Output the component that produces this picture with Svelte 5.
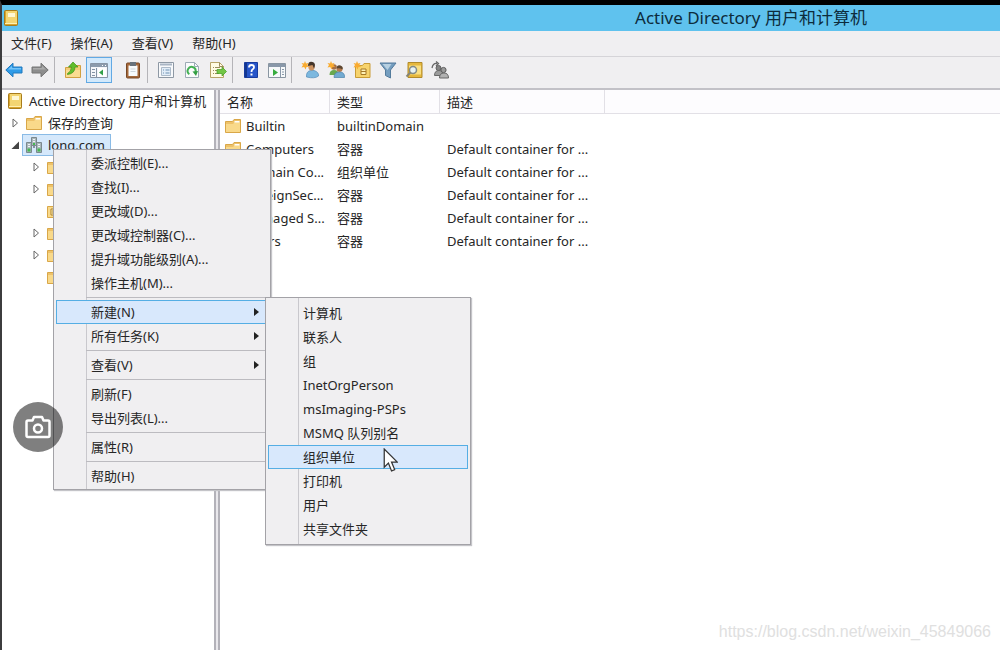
<script lang="ts">
    type Entry = { label: string; arrow?: boolean; active?: boolean };

    const menus = ["文件(F)", "操作(A)", "查看(V)", "帮助(H)"];

    const tools = [
        [
            { icon: "back", label: "后退" },
            { icon: "forward", label: "前进" },
        ],
        [
            { icon: "up", label: "上一级" },
            { icon: "tree", label: "控制台树" },
            { icon: "clipboard", label: "粘贴" },
        ],
        [
            { icon: "properties", label: "属性" },
            { icon: "refresh", label: "刷新" },
            { icon: "export", label: "导出列表" },
        ],
        [
            { icon: "help", label: "帮助" },
            { icon: "pane", label: "操作窗格" },
        ],
        [
            { icon: "user", label: "新建用户" },
            { icon: "group", label: "新建组" },
            { icon: "unit", label: "新建组织单位" },
            { icon: "filter", label: "筛选器" },
            { icon: "find", label: "查找" },
            { icon: "members", label: "添加到组" },
        ],
    ];

    const children = [
        { icon: "folder", expandable: true },
        { icon: "folder", expandable: true },
        { icon: "ou", expandable: false },
        { icon: "folder", expandable: true },
        { icon: "folder", expandable: true },
        { icon: "folder", expandable: false },
    ];

    const rows = [
        { icon: "folder", name: "Builtin", type: "builtinDomain", desc: "" },
        { icon: "folder", name: "Computers", type: "容器", desc: "Default container for ..." },
        { icon: "ou", name: "Domain Co...", type: "组织单位", desc: "Default container for ..." },
        { icon: "folder", name: "ForeignSec...", type: "容器", desc: "Default container for ..." },
        { icon: "folder", name: "Managed S...", type: "容器", desc: "Default container for ..." },
        { icon: "folder", name: "Users", type: "容器", desc: "Default container for ..." },
    ];

    const contextMenu: Entry[][] = [
        [
            { label: "委派控制(E)..." },
            { label: "查找(I)..." },
            { label: "更改域(D)..." },
            { label: "更改域控制器(C)..." },
            { label: "提升域功能级别(A)..." },
            { label: "操作主机(M)..." },
        ],
        [
            { label: "新建(N)", arrow: true, active: true },
            { label: "所有任务(K)", arrow: true },
        ],
        [{ label: "查看(V)", arrow: true }],
        [{ label: "刷新(F)" }, { label: "导出列表(L)..." }],
        [{ label: "属性(R)" }],
        [{ label: "帮助(H)" }],
    ];

    const newMenu = [
        "计算机",
        "联系人",
        "组",
        "InetOrgPerson",
        "msImaging-PSPs",
        "MSMQ 队列别名",
        "组织单位",
        "打印机",
        "用户",
        "共享文件夹",
    ];

    let selected = $state("组织单位");
</script>

{#snippet icon(name: string)}
    <svg class="icon" viewBox="0 0 18 18" aria-hidden="true">
        {#if name === "back"}
            <path d="M0.8 9 8 2.2V6h9v6H8v3.8z" fill="#2f9be8" stroke="#2078bd" />
            <path d="M3 8.5 7 4.8V7h9v1.5z" fill="#74c4f8" />
        {:else if name === "forward"}
            <path d="M17.2 9 10 2.2V6H1v6h9v3.8z" fill="#8d8d8d" stroke="#747474" />
            <path d="M15 8.5 11 4.8V7H2v1.5z" fill="#ababab" />
        {:else if name === "book"}
            <rect x="2.5" y="1.5" width="13" height="15" rx="1" fill="#d9a52c" stroke="#a87c1c" />
            <path d="M4 2h11v12H4z" fill="#f3d571" />
            <path d="M6 4h7v4H6z" fill="#fdf7d5" />
            <path d="M3 14.5h12" stroke="#fff0b0" />
        {:else if name === "folder"}
            <path d="M1.5 4.5h7l1.5-2h6.5v13h-15z" fill="#eec269" stroke="#d9a748" />
            <path d="M10.5 4h5v2h-5z" fill="#fff" />
            <path d="M2 7h7l1.5-1.5H16V15H2z" fill="#f9d98a" />
        {:else if name === "ou"}
            <path d="M1.5 4.5h7l1.5-2h6.5v13h-15z" fill="#f9d98a" stroke="#d9a748" />
            <path d="M5 7h6v6H5z" fill="#fff2bd" stroke="#ad822c" />
            <path d="M6 9h4M6 11h4" stroke="#ad822c" />
        {:else if name === "up"}
            <path d="M1.5 6.5h6l1.5-2h7.5v12h-15z" fill="#f3cd76" stroke="#d1a041" />
            <path d="M2 9h14v7H2z" fill="#fadc91" />
            <path d="M3.5 12.5Q7 11 7.5 6H4.500L9 1l5 5h-3Q11 12.500 3.500 13.500z" fill="#61bd2c" stroke="#3d9418" stroke-width=".7" />
        {:else if name === "tree"}
            <path d="M.5 2.5h17v14H.5z" fill="#f5f7fa" stroke="#8795a5" />
            <path d="M1 3h16v3H1z" fill="#8b9bad" />
            <path d="M12 4.5h1M15 4.5h1" stroke="#fff" />
            <path d="M6.500 7v9M2 8.500h3M2 11.500h3M2 14.500h3" stroke="#8393a5" />
            <path d="M8 7h8v9H8z" fill="#fff" />
            <path d="m13 8.500-4 3 4 3z" fill="#33a04a" />
        {:else if name === "clipboard"}
            <rect x="2.5" y="2" width="13" height="15" rx="1" fill="#a4683b" stroke="#774725" />
            <path d="M4.500 4.500h9V15h-9z" fill="#f7fafc" />
            <path d="M6 1h6v4H6z" fill="#68727b" />
            <path d="M6.500 8h5M6.500 10.500h5" stroke="#cdd5db" />
        {:else if name === "properties"}
            <path d="M1.500 1.500h15v15h-15z" fill="#f8f9fb" stroke="#8e98a4" />
            <path d="M3 3.500h12" stroke="#a9b5c4" stroke-width="2" />
            <path d="M4.500 6.500h9v8h-9z" fill="#e2edf8" stroke="#acbac9" />
            <path d="M6 9h1M8.500 9h4M6 12h1M8.500 12h4" stroke="#6e91b3" />
        {:else if name === "refresh"}
            <path d="M2.500 1.500h9l4 4v11h-13z" fill="#fafbfc" stroke="#9caab5" />
            <path d="M11.500 1.500v4h4" fill="none" stroke="#9caab5" />
            <path d="M6.300 13.200A4 4 0 1 1 12.500 11" fill="none" stroke="#43b053" stroke-width="2" />
            <path d="m9.500 10.500 5.500-.5-2 5z" fill="#329e42" />
        {:else if name === "export"}
            <path d="M1.500 1.500h9l4 4v11h-13z" fill="#fffbe3" stroke="#b7a467" />
            <path d="M10.500 1.500v4h4M4 6.500h1M6 6.500h5M4 9.500h1M6 9.500h4M4 12.500h1M6 12.500h4" fill="none" stroke="#998b5c" />
            <path d="M8 8.500h5V6l4.500 4.500L13 15v-2.500H8z" fill="#73c645" stroke="#429e24" stroke-width=".7" />
        {:else if name === "help"}
            <path d="M2.500 1.500h13v15h-13z" fill="#2755c9" stroke="#183b9e" />
            <path d="M3 2h2v14H3z" fill="#143790" />
            <path d="M7 6.500Q7 4 9.500 4T12 6.300Q12 7.500 10.700 8.300T9.500 11" fill="none" stroke="#fff" stroke-width="1.800" />
            <path d="M8.500 12.500h2v2h-2z" fill="#fff" />
        {:else if name === "pane"}
            <path d="M.5 2.500h17v14H.5z" fill="#f7f9fa" stroke="#8995a1" />
            <path d="M1 3h16v3H1z" fill="#8998a9" />
            <path d="M12.500 6v10M14 8.500h2M14 11h2M14 13.500h2" stroke="#8998a9" />
            <path d="m5 8 5 3.500L5 15z" fill="#38ac3e" />
        {:else if name === "user"}
            <path d="M5.500 16Q5 10 10 9.500l3 0Q18 11 17.500 15 14 18 5.500 16z" fill="#7db8df" stroke="#4e88b7" stroke-width=".7" />
            <ellipse cx="10.500" cy="5.500" rx="3.200" ry="4" fill="#ce9462" />
            <path d="M7 5Q7 0 11.500 1q4 1 1.500 6.500L11.500 4z" fill="#45362b" />
            <path d="m4 0 1 2.500L7.500 2 6.300 4 8 5.800 5.500 6 4.500 8.500 3.200 6 .5 6.500 2 4 .5 2l2.500.5z" fill="#f9ab30" />
        {:else if name === "group"}
            <circle cx="7" cy="6" r="2.800" fill="#a76f42" />
            <path d="M2.500 14q0-5 4.500-5t5 5z" fill="#69a84f" />
            <circle cx="12.500" cy="8" r="3" fill="#b67b4c" />
            <path d="M9.500 7.500q.5-4 4-3 3 1 2 4-3-2-6-1z" fill="#5c4630" />
            <path d="M7 16.500q0-5.500 5.500-5.500t5 5.500z" fill="#72aad1" stroke="#4c82a9" stroke-width=".7" />
            <path d="m4 0 1 2.500L7.500 2 6.300 4 8 5.800 5.500 6 4.500 8.500 3.200 6 .5 6.500 2 4 .5 2l2.500.5z" fill="#f9ab30" />
        {:else if name === "unit"}
            <path d="M2.500 4.500h7l1.500-2h6v14H2.500z" fill="#f7d36c" stroke="#c99c36" />
            <path d="M8 8h5v5.500H8z" fill="#fff2b5" stroke="#a57928" />
            <path d="M8 10.500h5" stroke="#a57928" />
            <path d="m4 0 1 2.500L7.500 2 6.300 4 8 5.800 5.500 6 4.500 8.500 3.200 6 .5 6.500 2 4 .5 2l2.500.5z" fill="#f9ab30" />
        {:else if name === "filter"}
            <path d="M1 2h16l-5.500 7v8l-5-2.500V9z" fill="#749dbf" stroke="#547b9c" />
            <path d="M3.500 3h9L8.500 9z" fill="#b6d0e2" />
        {:else if name === "find"}
            <path d="M3 1.500h14v15H3z" fill="#e6b83d" stroke="#b18a2b" />
            <path d="M4 4.500h12v9H4z" fill="#f9df83" />
            <circle cx="8" cy="9" r="3.500" fill="#e6f2f4" stroke="#828a86" stroke-width="1.500" />
            <path d="m5.500 11.500-4 4" stroke="#858475" stroke-width="2" />
        {:else if name === "members"}
            <path d="M1 7Q2 2 6 2.500M5 .5l2.500 2L5 5" fill="none" stroke="#676767" stroke-width="1.300" />
            <circle cx="7.500" cy="7" r="2.500" fill="#848484" stroke="#606060" />
            <path d="M3.500 14.500q0-5 4.500-5t4 5z" fill="#9b9b9b" stroke="#696969" />
            <circle cx="12.500" cy="9" r="2.600" fill="#9a9a9a" stroke="#5d5d5d" />
            <path d="M8.500 17q0-5 4.500-5t4.500 5z" fill="#b1b1b1" stroke="#676767" />
        {:else if name === "domain"}
            <path d="M9 5v7M4 9h10" stroke="#69777d" stroke-width="1.500" />
            <path d="M6.500 1.500h5v8h-5zM1.500 6.500h5v10h-5zM11.500 6.500h5v10h-5z" fill="#aab7bc" stroke="#7b898e" />
            <path d="M8 3.500h2M8 5.500h2M3 8.500h2M3 10.500h2M13 8.500h2M13 10.500h2" stroke="#eff4f5" />
            <path d="M2.500 12.500h3v3h-3zM12.500 12.500h3v3h-3zM8 7h2v2H8z" fill="#45b950" />
        {/if}
    </svg>
{/snippet}

{#snippet expander(open: boolean)}
    <svg class="expander" viewBox="0 0 9 10" aria-hidden="true">
        {#if open}
            <path d="M8 1.500V9H.5z" fill="#444" />
        {:else}
            <path d="M2 1v8l4.500-4z" fill="#fff" stroke="#666" />
        {/if}
    </svg>
{/snippet}

<div class="window">
    <header class="title-bar">
        {@render icon("book")}
        <h1>Active Directory 用户和计算机</h1>
    </header>

    <nav class="menu-bar">
        {#each menus as label}
            <button>{label}</button>
        {/each}
    </nav>

    <div class="toolbar" role="toolbar" aria-label="工具栏">
        {#each tools as group}
            <div class="tool-group">
                {#each group as tool}
                    <button
                        class="tool"
                        class:pressed={tool.icon === "tree"}
                        class:apart={tool.icon === "clipboard"}
                        aria-label={tool.label}
                    >
                        {@render icon(tool.icon)}
                    </button>
                {/each}
            </div>
        {/each}
    </div>

    <main>
        <aside role="tree" aria-label="控制台树">
            <div class="node root" role="treeitem" aria-selected="false">
                {@render icon("book")}
                <span>Active Directory 用户和计算机</span>
            </div>
            <div class="node" role="treeitem" aria-selected="false">
                {@render expander(false)}
                {@render icon("folder")}
                <span>保存的查询</span>
            </div>
            <div class="node" role="treeitem" aria-selected="true">
                {@render expander(true)}
                <div class="selection">
                    {@render icon("domain")}
                    <span>long.com</span>
                </div>
            </div>
            {#each children as child}
                <div class="node child" role="treeitem" aria-selected="false">
                    {#if child.expandable}
                        {@render expander(false)}
                    {:else}
                        <span class="expander"></span>
                    {/if}
                    {@render icon(child.icon)}
                </div>
            {/each}
        </aside>

        <section>
            <table>
                <thead>
                    <tr>
                        <th class="name">名称</th>
                        <th class="type">类型</th>
                        <th class="desc">描述</th>
                        <th></th>
                    </tr>
                </thead>
                <tbody>
                    {#each rows as row}
                        <tr>
                            <td>
                                <div class="cell">
                                    {@render icon(row.icon)}
                                    <span>{row.name}</span>
                                </div>
                            </td>
                            <td>{row.type}</td>
                            <td>{row.desc}</td>
                            <td></td>
                        </tr>
                    {/each}
                </tbody>
            </table>
        </section>
    </main>

    <div class="popup context" role="menu">
        {#each contextMenu as group}
            <div class="popup-group">
                {#each group as entry}
                    <button class="entry" class:active={entry.active} role="menuitem">
                        {entry.label}
                        {#if entry.arrow}
                            <svg class="more" viewBox="0 0 5 8" aria-hidden="true">
                                <path d="M0 0v8l5-4z" fill="#222" />
                            </svg>
                        {/if}
                    </button>
                {/each}
            </div>
        {/each}
    </div>

    <div class="popup submenu" role="menu">
        {#each newMenu as label}
            <button
                class="entry"
                class:active={label === selected}
                role="menuitem"
                onmouseenter={() => (selected = label)}>{label}</button
            >
        {/each}
    </div>

    <svg class="cursor" viewBox="0 0 14 23" aria-hidden="true">
        <path
            d="M1 1v17.500l4-4 3 7.500 3-1.300L8 13.500h5.500z"
            fill="#fff"
            stroke="#333"
            stroke-width="1.200"
        />
    </svg>

    <button class="capture" aria-label="截图">
        <svg viewBox="0 0 26 24" aria-hidden="true">
            <path
                d="M3 5.500h4.500L9 2h8l1.500 3.500H23q1.500 0 1.500 1.500v13.500q0 1.500-1.500 1.500H3q-1.500 0-1.500-1.500V7Q1.500 5.500 3 5.500z"
                fill="none"
                stroke="#fff"
                stroke-width="2.500"
                stroke-linejoin="round"
            />
            <circle cx="13" cy="13.500" r="4" fill="none" stroke="#fff" stroke-width="2.500" />
        </svg>
    </button>

    <div class="watermark">https://blog.csdn.net/weixin_45849066</div>
</div>

<style>
    :global(body) {
        background: #fff;
    }

    .window {
        position: relative;
        display: flex;
        flex-direction: column;
        box-sizing: border-box;
        min-height: 100vh;
        border-top: 5px solid #000;
        border-left: 2px solid #3c3c3e;
        overflow: hidden;
        font-family: "Noto Sans", "Noto Sans CJK SC", sans-serif;
        font-size: 13px;
        line-height: 20px;
        color: #262626;
    }

    button {
        font: inherit;
        color: inherit;
        background: none;
        border: none;
        padding: 0;
        white-space: nowrap;
    }

    .icon {
        width: 18px;
        height: 18px;
        flex: none;
    }

    .title-bar {
        display: flex;
        align-items: center;
        height: 26px;
        background: #5fc2ee;
    }

    .title-bar h1 {
        flex: 1;
        margin: 0;
        padding-left: 482px;
        text-align: center;
        font-size: 17px;
        font-weight: 400;
        line-height: 24px;
        color: #0d2c3c;
    }

    .menu-bar {
        display: flex;
        gap: 19px;
        height: 25px;
        padding-left: 9px;
        background: #f0eff1;
        border-bottom: 1px solid #d5d4d8;
    }

    .menu-bar button {
        height: 24px;
    }

    .toolbar {
        display: flex;
        align-items: flex-start;
        height: 31px;
        background: #f0eff1;
        border-bottom: 2px solid #c2c1c7;
    }

    .tool-group {
        display: flex;
        gap: 2px;
        padding-right: 2px;
        margin-right: 6px;
        border-right: 1px solid #b5b4b8;
    }

    .tool-group:last-child {
        border-right: none;
    }

    .tool {
        display: flex;
        align-items: center;
        justify-content: center;
        width: 24px;
        height: 26px;
    }

    .tool.pressed {
        background: #d3e9fb;
        outline: 1px solid #62a9e4;
        outline-offset: -1px;
        width: 26px;
        margin: 0 -1px;
    }

    .tool.apart {
        margin-left: 8px;
    }

    main {
        flex: 1;
        display: grid;
        grid-template-columns: 214px 1fr;
        gap: 2px;
        background: #e9e8ec;
    }

    aside {
        background: #fff;
        border-right: 2px solid #b3b2b9;
        overflow: hidden;
    }

    .node {
        display: flex;
        align-items: center;
        gap: 5px;
        height: 22px;
        padding-left: 9px;
        white-space: nowrap;
    }

    .node.root {
        padding-left: 4px;
    }

    .node.child {
        padding-left: 30px;
    }

    .expander {
        width: 9px;
        height: 10px;
        flex: none;
    }

    .selection {
        display: flex;
        align-items: center;
        gap: 5px;
        height: 20px;
        padding: 0 5px 0 2px;
        margin-left: -3px;
        background: #d5e8fb;
        border: 1px solid #8abbe6;
    }

    section {
        background: #fff;
        border-left: 2px solid #b3b2b9;
        min-width: 0;
    }

    table {
        width: 100%;
        table-layout: fixed;
        border-collapse: separate;
        border-spacing: 0;
    }

    th {
        box-sizing: border-box;
        height: 24px;
        padding: 0 0 0 7px;
        font-weight: 400;
        text-align: left;
        background: #fdfcfe;
        border-right: 1px solid #e2e0e6;
        border-bottom: 1px solid #e2e0e6;
    }

    th:last-child {
        border-right: none;
    }

    .name,
    .type {
        width: 110px;
    }

    .desc {
        width: 165px;
    }

    td {
        height: 23px;
        padding: 0 0 0 7px;
        white-space: nowrap;
    }

    .cell {
        display: flex;
        align-items: center;
        gap: 4px;
        margin-left: -3px;
    }

    .popup {
        position: absolute;
        box-sizing: border-box;
        background: linear-gradient(90deg, transparent 32px, #c9c8cd 32px 33px, transparent 33px) #f0eff1;
        border: 1px solid #a3a2a7;
        box-shadow: 1px 1px 1px #c4c4c8;
    }

    .context {
        top: 144px;
        left: 51px;
        width: 218px;
        padding: 1px 2px;
    }

    .submenu {
        top: 292px;
        left: 263px;
        width: 206px;
        padding: 3px 2px;
    }

    .popup-group + .popup-group::before {
        content: "";
        display: block;
        height: 1px;
        margin: 2px 0 2px 30px;
        background: #bcbbc0;
    }

    .entry {
        display: flex;
        align-items: center;
        justify-content: space-between;
        box-sizing: border-box;
        width: 100%;
        height: 24px;
        padding: 0 8px 0 34px;
        border: 1px solid transparent;
        text-align: left;
    }

    .entry.active {
        background: #d8e8fc;
        border-color: #55aee4;
    }

    .more {
        width: 5px;
        height: 8px;
    }

    .cursor {
        position: absolute;
        top: 443px;
        left: 381px;
        width: 15px;
        height: 24px;
    }

    .capture {
        position: absolute;
        top: 397px;
        left: 11px;
        display: flex;
        align-items: center;
        justify-content: center;
        width: 50px;
        height: 50px;
        border-radius: 50%;
        background: rgba(0, 0, 0, 0.5);
    }

    .capture svg {
        width: 26px;
        height: 24px;
    }

    .watermark {
        position: absolute;
        right: 9px;
        bottom: 8px;
        font-family: "Liberation Sans", sans-serif;
        font-size: 16px;
        color: #e0e0e0;
    }
</style>
